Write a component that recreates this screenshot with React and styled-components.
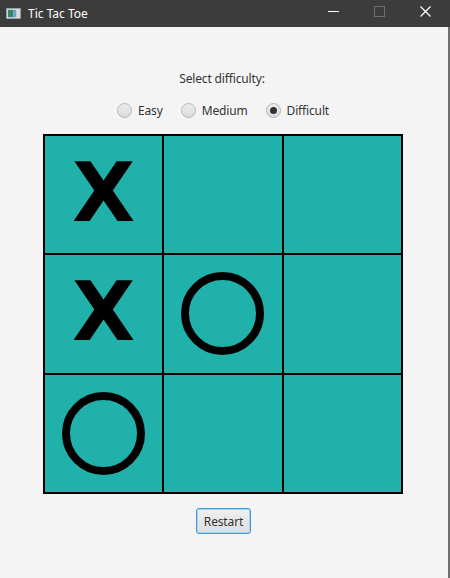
import React, { useState } from 'react';
import styled, { createGlobalStyle } from 'styled-components';

const GlobalStyle = createGlobalStyle`
	html, body {
		margin: 0;
		padding: 0;
		background: #f4f4f4;
	}
	#root {
		width: 450px;
		height: 578px;
		overflow: hidden;
	}
`

const initialBoard = ['X', '', '', 'X', 'O', '', 'O', '', ''];
const levels = ['Easy', 'Medium', 'Difficult'];

function App() {
	const [board, setBoard] = useState(initialBoard);
	const [level, setLevel] = useState('Difficult');

	return (
		<Window>
			<GlobalStyle />
			<TitleBar>
				<AppIcon viewBox="0 0 16 12">
					<rect x="0.5" y="0.5" width="15" height="11" fill="#d9dde0" stroke="#9aa4aa" />
					<rect x="2" y="2" width="6" height="8" fill="#2f8a6d" />
					<rect x="8" y="2" width="3" height="8" fill="#6fa6c9" />
				</AppIcon>
				<Title>Tic Tac Toe</Title>
				<Controls>
					<CtrlButton>
						<svg width="11" height="11" viewBox="0 0 11 11">
							<line x1="0" y1="5.5" x2="11" y2="5.5" stroke="#fff" strokeWidth="1" />
						</svg>
					</CtrlButton>
					<CtrlButton>
						<svg width="11" height="11" viewBox="0 0 11 11">
							<rect x="0.5" y="0.5" width="10" height="10" fill="none" stroke="#6e6e6e" strokeWidth="1" />
						</svg>
					</CtrlButton>
					<CtrlButton>
						<svg width="11" height="11" viewBox="0 0 11 11">
							<path d="M0.5 0.5 L10.5 10.5 M10.5 0.5 L0.5 10.5" stroke="#fff" strokeWidth="1.2" />
						</svg>
					</CtrlButton>
				</Controls>
			</TitleBar>
			<Content>
				<Label>Select difficulty:</Label>
				<RadioRow>
					{levels.map(l => (
						<RadioItem key={l} onClick={() => setLevel(l)}>
							<RadioCircle $checked={level === l} />
							<span>{l}</span>
						</RadioItem>
					))}
				</RadioRow>
				<Board>
					{board.map((v, i) => (
						<Cell key={i}>
							{v === 'X' && <XMark>X</XMark>}
							{v === 'O' && <OMark />}
						</Cell>
					))}
				</Board>
				<RestartButton onClick={() => setBoard(Array(9).fill(''))}>Restart</RestartButton>
			</Content>
		</Window>
	)
}

export default App;

const Window = styled.div`
	width: 450px;
	height: 578px;
	display: flex;
	flex-direction: column;
	font-family: "Noto Sans", "Open Sans", sans-serif;
`

const TitleBar = styled.div`
	height: 27px;
	background: #3c3c3c;
	display: flex;
	align-items: center;
	color: #fff;
	flex-shrink: 0;
`

const AppIcon = styled.svg`
	width: 15px;
	height: 11px;
	margin-left: 6px;
`

const Title = styled.div`
	margin-left: 7px;
	font-size: 12px;
	flex: 1;
	margin-top: -1px;
`

const Controls = styled.div`
	display: flex;
	height: 100%;
	margin-right: 2px;
`

const CtrlButton = styled.div`
	width: 46px;
	height: 100%;
	display: flex;
	align-items: center;
	justify-content: center;
	padding-bottom: 4px;
	box-sizing: border-box;
`

const Content = styled.div`
	flex: 1;
	display: flex;
	flex-direction: column;
	align-items: center;
	background: #f4f4f4;
	border-right: 2px solid #6f6f6f;
	padding-top: 44px;
	padding-right: 4px;
`

const Label = styled.div`
	font-size: 12px;
	line-height: 16px;
	color: #333;
	letter-spacing: -0.15px;
`

const RadioRow = styled.div`
	display: flex;
	gap: 18px;
	margin-top: 15px;
	padding-left: 2px;
`

const RadioItem = styled.label`
	display: flex;
	align-items: center;
	gap: 6px;
	font-size: 12px;
	color: #333;
	letter-spacing: -0.15px;
	cursor: pointer;
`

const RadioCircle = styled.span`
	width: 15px;
	height: 15px;
	border-radius: 50%;
	border: 1px solid #b5b5b5;
	background: linear-gradient(#ececec, #dcdcdc);
	display: flex;
	align-items: center;
	justify-content: center;
	box-sizing: border-box;
	&::after {
		content: '';
		width: 7px;
		height: 7px;
		border-radius: 50%;
		background: #333;
		display: ${p => (p.$checked ? 'block' : 'none')};
	}
`

const Board = styled.div`
	margin-top: 15px;
	margin-left: 2px;
	width: 360px;
	height: 360px;
	box-sizing: border-box;
	display: grid;
	grid-template-columns: repeat(3, 1fr);
	grid-template-rows: repeat(3, 1fr);
	gap: 2px;
	padding: 2px;
	background: #000;
`

const Cell = styled.div`
	background: #20b2aa;
	display: flex;
	align-items: center;
	justify-content: center;
`

const XMark = styled.span`
	font-family: "DejaVu Sans", sans-serif;
	font-weight: bold;
	font-size: 82px;
	line-height: 1;
	color: #000;
	margin-top: -4px;
`

const OMark = styled.div`
	width: 83px;
	height: 83px;
	border-radius: 50%;
	border: 8px solid #000;
	box-sizing: border-box;
`

const RestartButton = styled.button`
	margin-top: 14px;
	margin-left: 3px;
	height: 26px;
	padding: 0 7px;
	font-family: "Noto Sans", "Open Sans", sans-serif;
	font-size: 12px;
	letter-spacing: -0.15px;
	color: #333;
	background: linear-gradient(#f0f0f0, #dedede);
	border: 1px solid #3d9ad6;
	box-shadow: 0 0 0 1px #a8d4ef inset;
	border-radius: 3px;
	cursor: pointer;
`
